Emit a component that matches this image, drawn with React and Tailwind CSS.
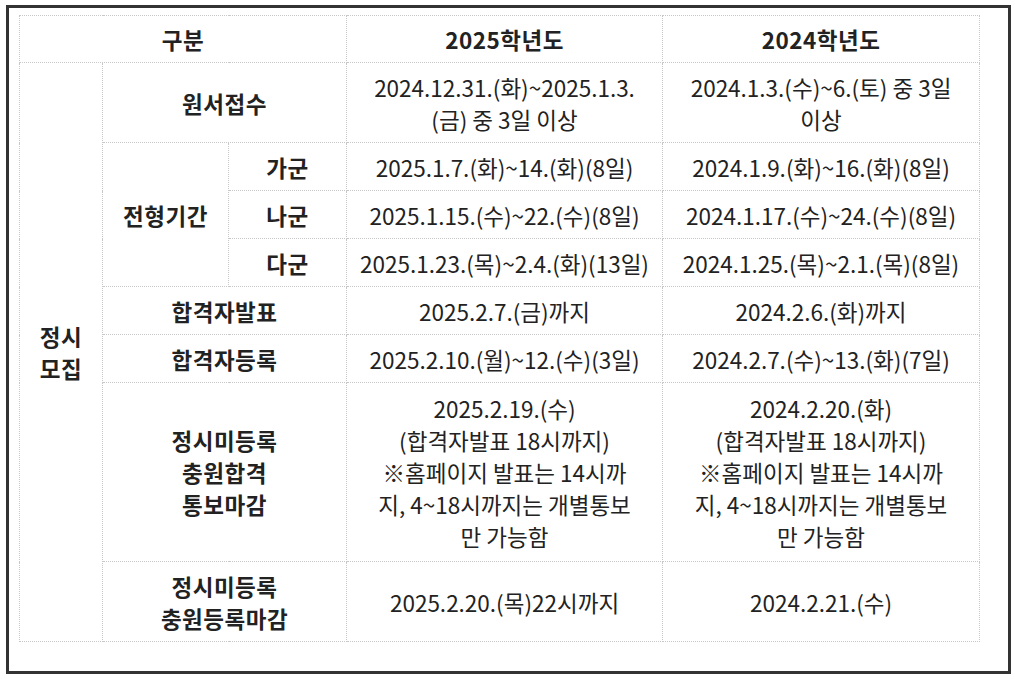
const td = "border border-dotted border-[#c8c8c8] px-2 py-0 text-center align-middle whitespace-nowrap";
const th = td + " font-bold tracking-[0.5px]";

export default function App() {
  return (
    <div
      className="bg-white w-[1015px] h-[679px] pt-[5px] pl-[6px]"
      style={{ fontFamily: '"Noto Sans CJK KR", "Noto Sans", sans-serif' }}
    >
      <div className="w-[1005px] h-[669px] border-[3px] border-[#333] pl-[10px] pt-[7px]">
        <table className="border-collapse w-[960px] text-[22.5px] leading-[32px] text-[#222] table-fixed">
          <colgroup>
            <col className="w-[83px]" />
            <col className="w-[126px]" />
            <col className="w-[118px]" />
            <col className="w-[316px]" />
            <col className="w-[317px]" />
          </colgroup>
          <tbody>
            <tr className="h-[47px]">
              <td className={th} colSpan={3}>구분</td>
              <td className={th}>2025학년도</td>
              <td className={th}>2024학년도</td>
            </tr>
            <tr className="h-[80px]">
              <td className={th} rowSpan={9}>정시<br />모집</td>
              <td className={th} colSpan={2}>원서접수</td>
              <td className={td}>2024.12.31.(화)~2025.1.3.<br />(금) 중 3일 이상</td>
              <td className={td}>2024.1.3.(수)~6.(토) 중 3일<br />이상</td>
            </tr>
            <tr className="h-[48px]">
              <td className={th} rowSpan={3}>전형기간</td>
              <td className={th}>가군</td>
              <td className={td}>2025.1.7.(화)~14.(화)(8일)</td>
              <td className={td}>2024.1.9.(화)~16.(화)(8일)</td>
            </tr>
            <tr className="h-[48px]">
              <td className={th}>나군</td>
              <td className={td}>2025.1.15.(수)~22.(수)(8일)</td>
              <td className={td}>2024.1.17.(수)~24.(수)(8일)</td>
            </tr>
            <tr className="h-[48px]">
              <td className={th}>다군</td>
              <td className={td}>2025.1.23.(목)~2.4.(화)(13일)</td>
              <td className={td}>2024.1.25.(목)~2.1.(목)(8일)</td>
            </tr>
            <tr className="h-[48px]">
              <td className={th} colSpan={2}>합격자발표</td>
              <td className={td}>2025.2.7.(금)까지</td>
              <td className={td}>2024.2.6.(화)까지</td>
            </tr>
            <tr className="h-[48px]">
              <td className={th} colSpan={2}>합격자등록</td>
              <td className={td}>2025.2.10.(월)~12.(수)(3일)</td>
              <td className={td}>2024.2.7.(수)~13.(화)(7일)</td>
            </tr>
            <tr className="h-[179px]">
              <td className={th} colSpan={2}>정시미등록<br />충원합격<br />통보마감</td>
              <td className={td}>
                2025.2.19.(수)<br />(합격자발표 18시까지)<br />※홈페이지 발표는 14시까<br />지, 4~18시까지는 개별통보<br />만 가능함
              </td>
              <td className={td}>
                2024.2.20.(화)<br />(합격자발표 18시까지)<br />※홈페이지 발표는 14시까<br />지, 4~18시까지는 개별통보<br />만 가능함
              </td>
            </tr>
            <tr className="h-[80px]">
              <td className={th} colSpan={2}>정시미등록<br />충원등록마감</td>
              <td className={td}>2025.2.20.(목)22시까지</td>
              <td className={td}>2024.2.21.(수)</td>
            </tr>
          </tbody>
        </table>
      </div>
    </div>
  );
}
